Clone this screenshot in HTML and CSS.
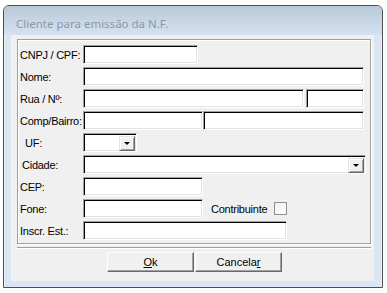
FILE: index.html
```html
<!DOCTYPE html>
<html lang="pt">
<head>
  <meta charset="UTF-8" />
  <title>Cliente para emissão da N.F.</title>
  <link rel="stylesheet" href="styles.css">
</head>
<body>
  <div class="window">
    <div class="titlebar">Cliente para emissão da N.F.</div>
    <div class="client">
      <div class="group">
        <div class="row">
          <span class="lbl">CNPJ / CPF:</span>
          <input class="txt" style="width:115px" type="text">
        </div>
        <div class="row">
          <span class="lbl">Nome:</span>
          <input class="txt" style="width:281px" type="text">
        </div>
        <div class="row">
          <span class="lbl">Rua / Nº:</span>
          <input class="txt" style="width:221px" type="text">
          <input class="txt num" style="width:58px" type="text">
        </div>
        <div class="row">
          <span class="lbl">Comp/Bairro:</span>
          <input class="txt" style="width:120px" type="text">
          <input class="txt" style="width:161px" type="text">
        </div>
        <div class="row">
          <span class="lbl uf">UF:</span>
          <div class="combo" style="width:54px"><span class="drop"></span></div>
        </div>
        <div class="row">
          <span class="lbl cidade">Cidade:</span>
          <div class="combo" style="width:283px"><span class="drop"></span></div>
        </div>
        <div class="row">
          <span class="lbl">CEP:</span>
          <input class="txt" style="width:120px" type="text">
        </div>
        <div class="row">
          <span class="lbl">Fone:</span>
          <input class="txt" style="width:120px" type="text">
          <span class="check-lbl">Contribuinte</span>
          <span class="check"></span>
        </div>
        <div class="row">
          <span class="lbl">Inscr. Est.:</span>
          <input class="txt" style="width:204px" type="text">
        </div>
      </div>
      <div class="sep"></div>
      <div class="actions">
        <button class="btn"><u>O</u>k</button>
        <button class="btn">Cancela<u>r</u></button>
      </div>
    </div>
  </div>
</body>
</html>
```

FILE: styles.css
```css
* { box-sizing: border-box; }
body {
  margin: 0;
  background: #fff;
  font-family: "Liberation Sans", Arial, sans-serif;
  font-size: 11px;
  color: #000;
}
.window {
  display: flex;
  flex-direction: column;
  width: 380px;
  height: 283px;
  margin: 5px 0 0 3px;
  border: 1px solid #4e4e4e;
  border-radius: 6px 6px 0 0;
  background: #dae6f3;
  box-shadow: inset 1px 1px 0 #eef3f9, inset -1px 0 0 #eef3f9;
}
.titlebar {
  height: 29px;
  padding: 11px 0 0 12px;
  border-radius: 5px 5px 0 0;
  background: linear-gradient(#bac9d9, #d4e2f0);
  font-family: "Noto Sans", sans-serif;
  font-size: 11.5px;
  line-height: 14px;
  color: #8a98a8;
}
.client {
  height: 246px;
  margin: 0 8px 6px 7px;
  background: #f0f0f0;
}
.group {
  display: flex;
  flex-direction: column;
  gap: 3px;
  height: 205px;
  margin: 4px 3px 0 6px;
  padding: 5px 0 2px 2px;
  border: 1px solid #a0a0a0;
  box-shadow: 1px 1px 0 #fff, inset 1px 1px 0 #fff;
}
.row {
  display: flex;
  align-items: center;
  height: 19px;
}
.row > * { flex-shrink: 0; }
.lbl {
  width: 63px;
  white-space: nowrap;
  letter-spacing: -0.25px;
}
.lbl.uf { padding-left: 5px; }
.lbl.cidade { padding-left: 2px; }
.txt, .combo {
  height: 19px;
  margin: 0;
  padding: 0;
  border: 1px solid;
  border-color: #a0a0a0 #fff #fff #a0a0a0;
  background: #fff;
  box-shadow: inset 1px 1px 0 #000, inset -1px -1px 0 #e3e3e3;
  outline: none;
}
.txt.num { margin-left: 2px; }
.combo {
  display: flex;
  justify-content: flex-end;
  padding: 2px 1px 1px 2px;
}
.drop {
  position: relative;
  width: 16px;
  height: 15px;
  border: 1px solid;
  border-color: #e3e3e3 #696969 #696969 #e3e3e3;
  background: #f0f0f0;
  box-shadow: inset 1px 1px 0 #fff, inset -1px -1px 0 #a0a0a0;
}
.drop::after {
  content: "";
  position: absolute;
  left: 4px;
  top: 5px;
  border-left: 3px solid transparent;
  border-right: 3px solid transparent;
  border-top: 3px solid #000;
}
.check-lbl {
  width: 63px;
  margin-left: 8px;
  letter-spacing: -0.25px;
}
.check {
  width: 13px;
  height: 13px;
  border: 1px solid #8e8f8f;
  background: linear-gradient(135deg, #f0f0f0, #fff);
}
.sep {
  height: 2px;
  margin: 3px 3px 0 6px;
  border-top: 1px solid #a0a0a0;
  border-bottom: 1px solid #fff;
}
.actions {
  display: flex;
  gap: 1px;
  margin-top: 3px;
  padding-left: 96px;
}
.btn {
  width: 87px;
  height: 20px;
  padding: 0;
  border: 1px solid;
  border-color: #fff #696969 #696969 #fff;
  background: #f0f0f0;
  box-shadow: inset -1px -1px 0 #a0a0a0;
  font-family: "Liberation Sans", Arial, sans-serif;
  font-size: 11px;
  color: #000;
}
```
